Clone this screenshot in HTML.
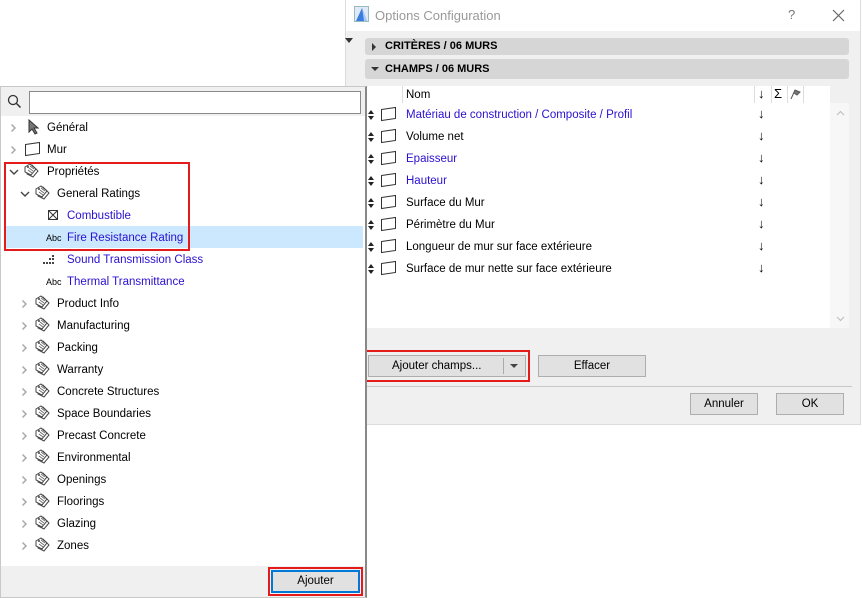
<!DOCTYPE html>
<html><head><meta charset="utf-8"><style>
*{box-sizing:border-box;margin:0;padding:0}
body{width:862px;height:598px;position:relative;background:#fff;font-family:"Liberation Sans",sans-serif;font-size:11.5px;color:#000;overflow:hidden}
.a{position:absolute}
.btn{position:absolute;background:#e1e1e1;border:1px solid #adadad;text-align:center;font-size:11.5px;line-height:20px}
.row{position:absolute;height:22px;line-height:24px;white-space:nowrap}
.blue{color:#2a10d0}
svg{position:absolute}
</style></head><body>

<!-- dialog -->
<div class="a" style="left:345px;top:0;width:516px;height:425px;background:#f0f0f0;border:1px solid #dcdcdc;border-top:none"></div>
<div class="a" style="left:346px;top:0;width:514px;height:31px;background:#fff"></div>
<svg style="left:354px;top:6px" width="15" height="16" viewBox="0 0 15 16"><rect x="0.5" y="0.5" width="14" height="15" fill="#dfe9f7" stroke="#9bb"/><path d="M2 15 L8 2 L13 15 Z" fill="#3a7de0"/><path d="M8 2 L13 15 L10 15 Z" fill="#a9c9f5"/></svg>
<div class="a" style="left:375px;top:8px;font-size:13px;color:#999">Options Configuration</div>
<div class="a" style="left:788px;top:7px;font-size:13px;color:#777">?</div>
<svg style="left:832px;top:9px" width="13" height="13"><path d="M1 1 L12 12 M12 1 L1 12" stroke="#666" stroke-width="1.2"/></svg>
<div class="a" style="left:345px;top:38px;width:0;height:0;border-left:4px solid transparent;border-right:4px solid transparent;border-top:5px solid #333"></div>

<div class="a" style="left:365px;top:38px;width:484px;height:17px;background:#d6d6d6;border-radius:3px"></div>
<div class="a" style="left:372px;top:43px;border-top:4px solid transparent;border-bottom:4px solid transparent;border-left:4px solid #333"></div>
<div class="a" style="left:385px;top:40px;font-weight:bold;font-size:11px">CRITÈRES / 06 MURS</div>
<div class="a" style="left:365px;top:59px;width:484px;height:20px;background:#d6d6d6;border-radius:3px"></div>
<div class="a" style="left:371px;top:67px;border-left:4px solid transparent;border-right:4px solid transparent;border-top:4px solid #333"></div>
<div class="a" style="left:385px;top:63px;font-weight:bold;font-size:11px">CHAMPS / 06 MURS</div>

<div class="a" style="left:367px;top:86px;width:463px;height:242px;background:#fff"></div>
<div class="a" style="left:830px;top:103px;width:19px;height:225px;background:#f7f7f7"></div>
<div class="a" style="left:402px;top:86px;width:1px;height:17px;background:#ddd"></div>
<div class="a" style="left:754px;top:86px;width:1px;height:17px;background:#ddd"></div>
<div class="a" style="left:771px;top:86px;width:1px;height:17px;background:#ddd"></div>
<div class="a" style="left:787px;top:86px;width:1px;height:17px;background:#ddd"></div>
<div class="a" style="left:803px;top:86px;width:1px;height:17px;background:#ddd"></div>
<div class="a" style="left:406px;top:89px">Nom</div>
<div class="a" style="left:758px;top:86px;font-size:13px">↓</div>
<div class="a" style="left:774px;top:86px;font-size:13px">Σ</div>
<svg style="left:789px;top:88px" width="12" height="12"><path d="M2 11 L6 2 L11 4 L8 7 L5 5" fill="#777" stroke="#555"/></svg>
<svg style="left:836px;top:110px" width="9" height="6"><path d="M1 5 L4.5 1.5 L8 5" fill="none" stroke="#bbb"/></svg>
<svg style="left:836px;top:316px" width="9" height="6"><path d="M1 1 L4.5 4.5 L8 1" fill="none" stroke="#bbb"/></svg>

<div id="rt"></div>

<div class="a" style="left:363px;top:350px;width:167px;height:32px;border:2px solid #e51b1b"></div>
<div class="btn" style="left:368px;top:355px;width:158px;height:22px;text-align:left;padding-left:23px">Ajouter champs...</div>
<div class="a" style="left:503px;top:358px;width:1px;height:16px;background:#aaa"></div>
<div class="a" style="left:510px;top:364px;border-left:4px solid transparent;border-right:4px solid transparent;border-top:4px solid #444"></div>
<div class="btn" style="left:538px;top:355px;width:108px;height:22px">Effacer</div>
<div class="a" style="left:366px;top:386px;width:486px;height:1px;background:#c8c8c8"></div>
<div class="btn" style="left:690px;top:393px;width:68px;height:22px">Annuler</div>
<div class="btn" style="left:776px;top:393px;width:68px;height:22px">OK</div>

<!-- left panel -->
<div class="a" style="left:0;top:86px;width:367px;height:512px;background:#fff;border:1px solid #c8c8c8;border-right:2px solid #888"></div>
<div class="a" style="left:1px;top:87px;width:364px;height:29px;background:#f0f0f0"></div>
<svg style="left:7px;top:94px" width="15" height="15"><circle cx="6" cy="6" r="4.5" fill="none" stroke="#333" stroke-width="1.3"/><path d="M9.5 9.5 L13.5 13.5" stroke="#333" stroke-width="1.5"/></svg>
<div class="a" style="left:29px;top:91px;width:332px;height:23px;background:#fff;border:1px solid #8a8a8a"></div>
<div class="a" style="left:4px;top:226px;width:359px;height:22px;background:#cce8ff"></div>
<div id="lt"></div>
<div class="a" style="left:4px;top:162px;width:186px;height:89px;border:2px solid #e51b1b"></div>
<div class="a" style="left:1px;top:566px;width:364px;height:31px;background:#f0f0f0"></div>
<div class="a" style="left:268px;top:567px;width:95px;height:29px;border:2px solid #e51b1b"></div>
<div class="btn" style="left:271px;top:570px;width:89px;height:23px;border:2px solid #0078d7;line-height:19px">Ajouter</div>

<script>
var tag='<path d="M3 6 L8 2 L14 8 L9 14 L3 11 Z" fill="none" stroke="#444"/><path d="M1 4 L6 1 L12 6 L7 12 L1 9 Z" fill="#fff" stroke="#444"/><path d="M4 7 L8 10 M5 5 L9 8 M6 3 L10 6" stroke="#666" stroke-width=".8"/><circle cx="4" cy="4" r="1" fill="#444"/>';
var wall='<path d="M1.5 3.5 L15.5 1.5 L15.5 12.5 L1.5 14.5 Z" fill="#fff" stroke="#333"/>';
var L=[
[127,0,'chev','cursor','Général',0],[149,0,'chev','wall','Mur',0],[171,0,'down','tag','Propriétés',0],
[193,1,'down','tag','General Ratings',0],[215,2,'','box','Combustible',1],[237,2,'','abc','Fire Resistance Rating',1],
[259,2,'','grid','Sound Transmission Class',1],[281,2,'','abc','Thermal Transmittance',1]];
['Product Info','Manufacturing','Packing','Warranty','Concrete Structures','Space Boundaries','Precast Concrete','Environmental','Openings','Floorings','Glazing','Zones'].forEach(function(t,i){L.push([303+22*i,1,'chev','tag',t,0])});
var h='';
L.forEach(function(r){var top=r[0]-11,lv=r[1];
var cx=lv==0?10:21, ix=lv==0?24:(lv==1?35:46), tx=lv==0?47:(lv==1?57:67);
if(r[2]=='chev')h+='<svg style="left:'+cx+'px;top:'+(top+7)+'px" width="7" height="10"><path d="M1.5 1.5 L5 5 L1.5 8.5" fill="none" stroke="#aaa" stroke-width="1.5"/></svg>';
if(r[2]=='down')h+='<svg style="left:'+(cx-1)+'px;top:'+(top+8)+'px" width="10" height="8"><path d="M1 2 L5 6 L9 2" fill="none" stroke="#444" stroke-width="1.4"/></svg>';
var ic='';
if(r[3]=='tag')ic='<svg style="left:'+ix+'px;top:'+(top+3)+'px" width="17" height="17">'+tag+'</svg>';
if(r[3]=='wall')ic='<svg style="left:'+ix+'px;top:'+(top+3)+'px" width="17" height="17">'+wall+'</svg>';
if(r[3]=='cursor')ic='<svg style="left:'+(ix+3)+'px;top:'+(top+3)+'px" width="14" height="16"><path d="M2 1 L2 13 L5 10 L8 15 L10 14 L7 9 L11 9 Z" fill="#777" stroke="#333"/></svg>';
if(r[3]=='box')ic='<svg style="left:'+(ix+1)+'px;top:'+(top+5)+'px" width="12" height="12"><rect x="1.5" y="1.5" width="9" height="9" fill="none" stroke="#333"/><path d="M1.5 1.5 L10.5 10.5 M10.5 1.5 L1.5 10.5" stroke="#333"/></svg>';
if(r[3]=='abc')ic='<div class="a" style="left:'+ix+'px;top:'+(top+7)+'px;font-size:9px">Abc</div>';
if(r[3]=='grid')ic='<svg style="left:'+(ix-4)+'px;top:'+(top+6)+'px" width="14" height="12"><g fill="#444"><rect x="10" y="1" width="2" height="2"/><rect x="7" y="4" width="2" height="2"/><rect x="10" y="4" width="2" height="2"/><rect x="1" y="8" width="2" height="2"/><rect x="4" y="8" width="2" height="2"/><rect x="7" y="8" width="2" height="2"/><rect x="10" y="8" width="2" height="2"/></g></svg>';
h+=ic+'<div class="row'+(r[5]?' blue':'')+'" style="left:'+tx+'px;top:'+top+'px">'+r[4]+'</div>';});
document.getElementById('lt').outerHTML=h;
var R=[['Matériau de construction / Composite / Profil',1],['Volume net',0],['Epaisseur',1],['Hauteur',1],['Surface du Mur',0],['Périmètre du Mur',0],['Longueur de mur sur face extérieure',0],['Surface de mur nette sur face extérieure',0]];
var g='';R.forEach(function(r,i){var top=103+22*i;
g+='<svg style="left:368px;top:'+(top+7)+'px" width="6" height="10"><path d="M0 4 L3 0 L6 4 Z M0 6 L3 10 L6 6 Z" fill="#222"/></svg>';
g+='<svg style="left:380px;top:'+(top+3)+'px" width="17" height="17">'+wall+'</svg>';
g+='<div class="row'+(r[1]?' blue':'')+'" style="left:406px;top:'+top+'px">'+r[0]+'</div>';
g+='<div class="a" style="left:758px;top:'+(top+3)+'px;font-size:13px">↓</div>';});
document.getElementById('rt').outerHTML=g;
</script>
</body></html>
